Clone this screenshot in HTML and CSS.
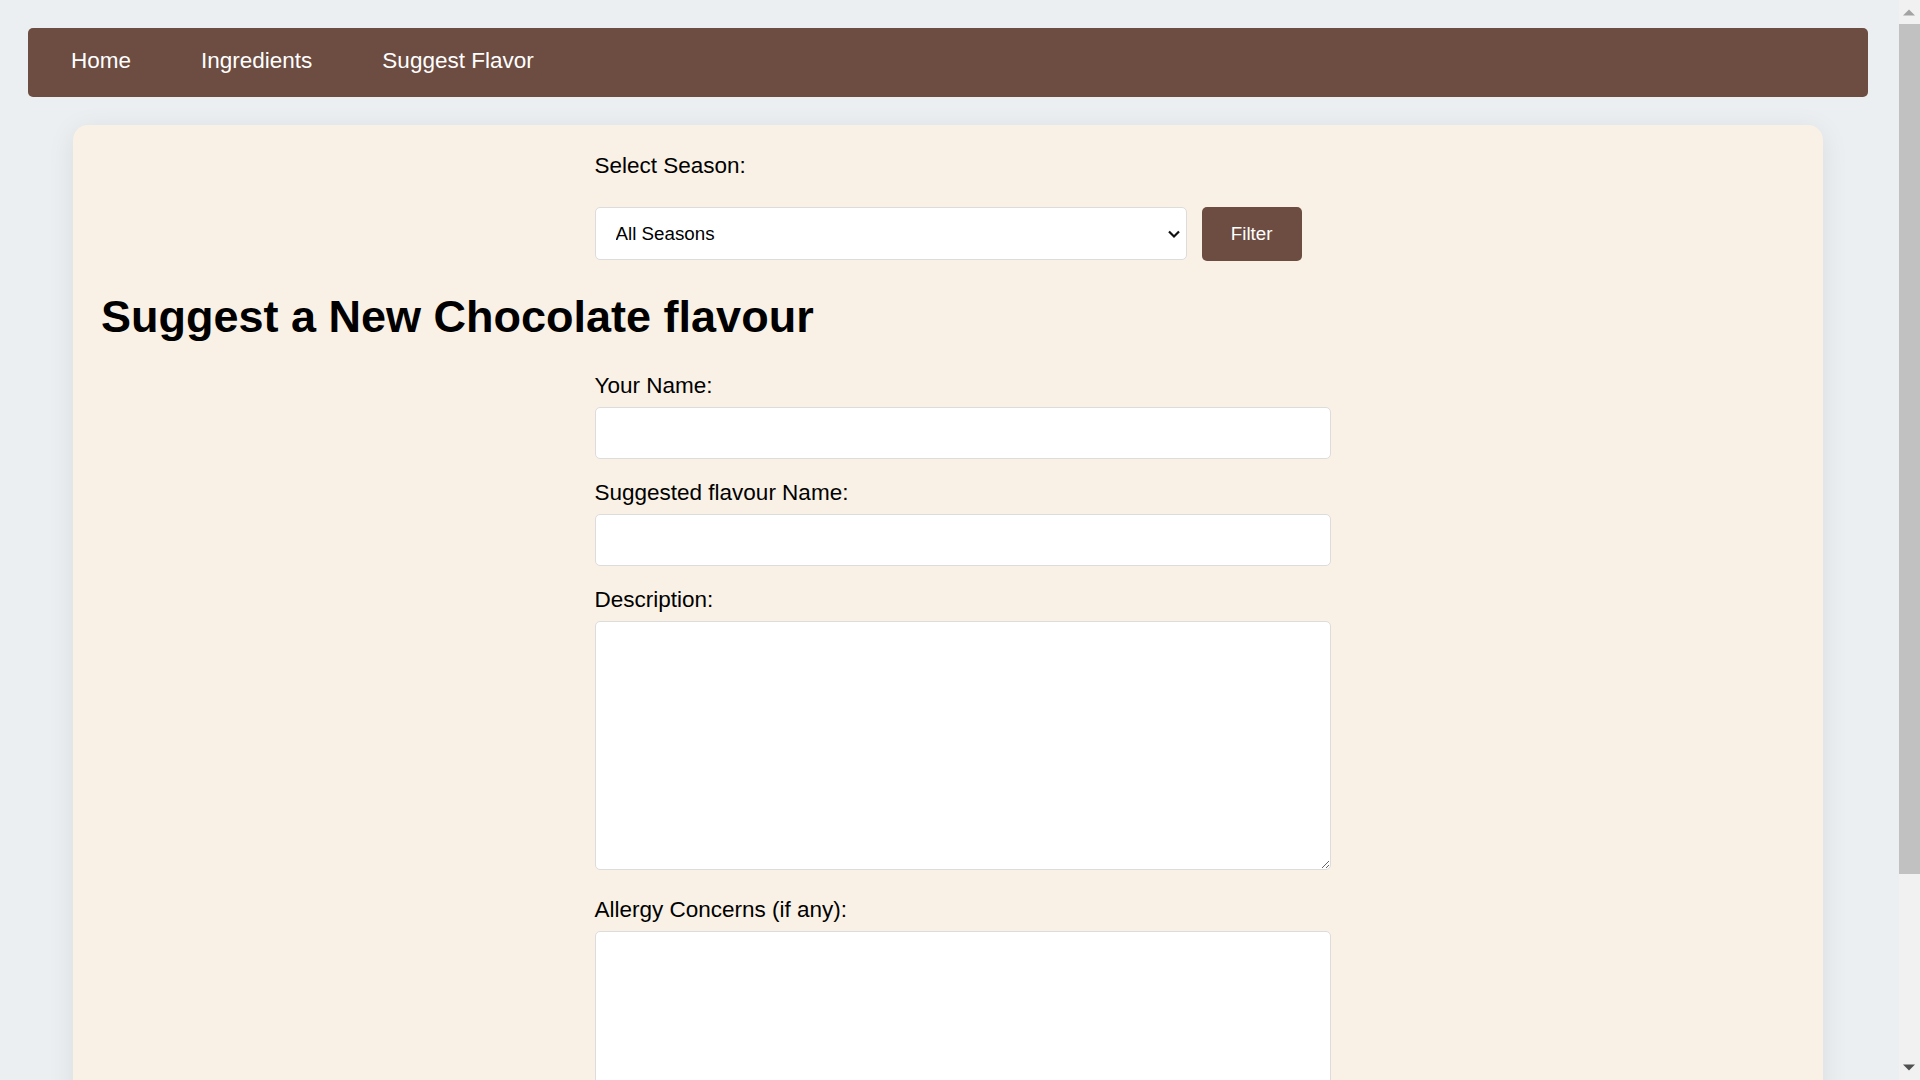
FILE: index.html
```html
<!DOCTYPE html>
<html lang="en">
<head>
<meta charset="utf-8">
<title>Suggest Flavor</title>
<link rel="stylesheet" href="styles.css">
</head>
<body>
<div class="page">
  <nav class="topnav">
    <a class="nav-link" href="#">Home</a>
    <a class="nav-link" href="#">Ingredients</a>
    <a class="nav-link" href="#">Suggest Flavor</a>
  </nav>
  <main class="card">
    <section class="filter">
      <label class="field-label filter-label" for="season">Select Season:</label>
      <div class="filter-row">
        <select id="season" class="season-select">
          <option>All Seasons</option>
          <option>Spring</option>
          <option>Summer</option>
          <option>Autumn</option>
          <option>Winter</option>
        </select>
        <button class="btn" type="button">Filter</button>
      </div>
    </section>
    <h1 class="page-title">Suggest a New Chocolate flavour</h1>
    <form class="suggest-form">
      <label class="field-label" for="name">Your Name:</label>
      <input class="text-input" id="name" type="text">
      <label class="field-label" for="flavour">Suggested flavour Name:</label>
      <input class="text-input" id="flavour" type="text">
      <label class="field-label" for="desc">Description:</label>
      <textarea class="text-area" id="desc"></textarea>
      <label class="field-label" for="allergy">Allergy Concerns (if any):</label>
      <textarea class="text-area" id="allergy"></textarea>
    </form>
  </main>
</div>
<div class="scrollbar" aria-hidden="true">
  <div class="sb-button">
    <svg width="21" height="21" viewBox="0 0 21 21"><polygon points="4,15.5 16,15.5 10,9.5" fill="#a3a3a3"/></svg>
  </div>
  <div class="sb-track">
    <div class="sb-thumb"></div>
  </div>
  <div class="sb-button">
    <svg width="21" height="21" viewBox="0 0 21 21"><polygon points="4,5.5 16,5.5 10,11.5" fill="#505050"/></svg>
  </div>
</div>
</body>
</html>
```

FILE: styles.css
```css
body {
  margin: 0;
  display: flex;
  align-items: flex-start;
  background: #eceff1;
  font-family: "Liberation Sans", Arial, sans-serif;
  font-size: 22.5px;
  color: #000;
}

.page {
  flex: 1;
  min-width: 0;
}

.scrollbar {
  flex: 0 0 21px;
  height: 100vh;
  display: flex;
  flex-direction: column;
  background: #f1f1f1;
}

.sb-button {
  height: 21px;
  flex: 0 0 21px;
}

.sb-button svg {
  display: block;
}

.sb-track {
  flex: 1;
  padding-top: 3px;
}

.sb-thumb {
  height: 850px;
  background: #c1c1c1;
}

.topnav {
  display: flex;
  align-items: center;
  gap: 70px;
  height: 69px;
  box-sizing: border-box;
  margin: 28px 31px 0 28px;
  padding: 0 0 3px 43px;
  background: #6d4c41;
  border-radius: 5px;
}

.nav-link {
  color: #fff;
  text-decoration: none;
  font-size: 22.5px;
}

.card {
  margin: 28px 76px 21px 73px;
  padding: 28px;
  background: #f9f1e5;
  border-radius: 15px;
  box-shadow: 0 5px 28px rgba(0, 0, 0, 0.08);
}

.filter {
  width: 707px;
  margin: 0 auto;
}

.field-label {
  display: block;
  line-height: 25px;
  margin-bottom: 9px;
}

.filter-label {
  margin-bottom: 29px;
}

.filter-row {
  display: flex;
  gap: 15px;
  align-items: flex-start;
}

.season-select {
  -webkit-appearance: none;
  appearance: none;
  box-sizing: border-box;
  width: 593px;
  height: 53px;
  padding: 0 30px 0 20px;
  border: 1px solid #dcdcdc;
  border-radius: 5px;
  background: #fff url("data:image/svg+xml;utf8,<svg xmlns='http://www.w3.org/2000/svg' width='14' height='10'><polyline points='2,2.5 7,7.5 12,2.5' fill='none' stroke='%23111' stroke-width='2.2'/></svg>") no-repeat right 5px center;
  font-family: "Liberation Sans", Arial, sans-serif;
  font-size: 18.75px;
  color: #000;
}

.btn {
  box-sizing: border-box;
  height: 54px;
  padding: 0 29px;
  border: none;
  border-radius: 5px;
  background: #6d4c41;
  color: #fff;
  font-family: "Liberation Sans", Arial, sans-serif;
  font-size: 18.75px;
  cursor: pointer;
}

.page-title {
  margin: 30px 0;
  font-size: 45px;
  font-weight: bold;
  line-height: 52px;
}

.suggest-form {
  width: 707px;
  margin: 0 auto;
}

.text-input,
.text-area {
  display: block;
  box-sizing: border-box;
  width: 736px;
  border: 1px solid #dcdcdc;
  border-radius: 5px;
  background: #fff;
  font-family: "Liberation Sans", Arial, sans-serif;
  font-size: 18.75px;
}

.text-input {
  height: 52px;
  margin: 0 0 21px 0;
  padding: 0 12px;
}

.text-area {
  height: 249px;
  margin: 0 0 27px 0;
  padding: 12px;
}
```
